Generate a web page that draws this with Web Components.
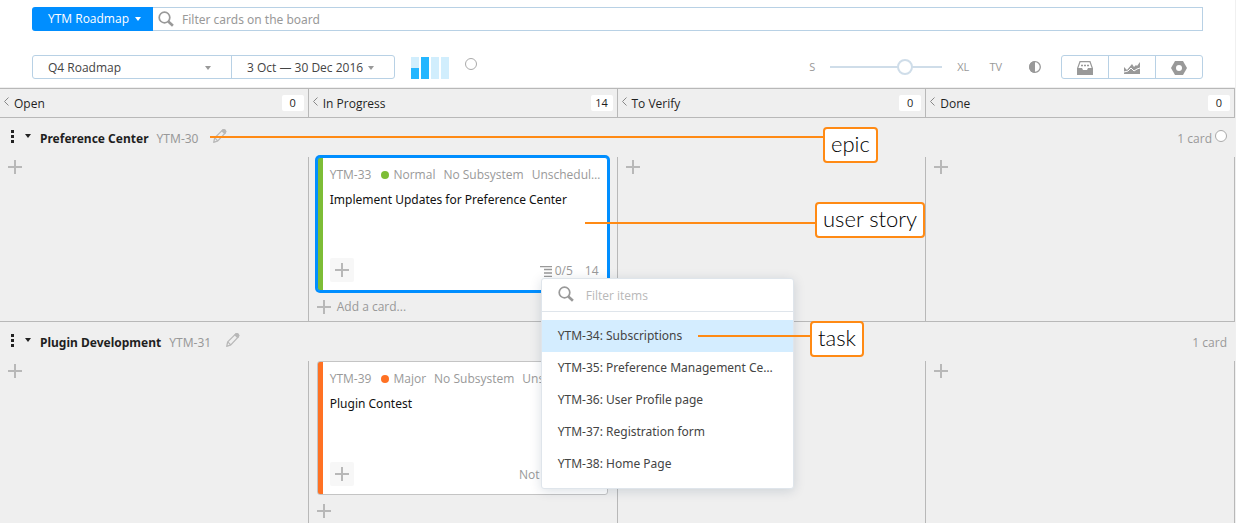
<!DOCTYPE html>
<html lang="en">
<head>
<meta charset="utf-8">
<title>YTM Roadmap</title>
<style>
  html { background: #fff; }
  body {
    margin: 0;
    border-right: 1px solid #f0f0f0;
    font: 12px/16px "Open Sans", "Noto Sans", sans-serif;
    color: #1f1f1f;
    overflow: hidden;
    --line: #b8d1e5;
    --grid: #b8b8b8;
    --muted: #999;
    --wide: "Noto Sans", "Open Sans", sans-serif;
  }
</style>
</head>
<body>
<agile-page></agile-page>
<script>
const icons = {
  search: '<svg width="16" height="16" viewBox="0 0 16 16" fill="none" stroke="#999"><circle cx="6.5" cy="6.5" r="5.3" stroke-width="1.7"/><path d="M10.3 10.5l4.6 4.3" stroke-width="2.6"/></svg>',
  plus: '<svg width="14" height="14" viewBox="0 0 14 14" fill="#b8b8b8"><path d="M6 0h2v6h6v2H8v6H6V8H0V6h6z"/></svg>',
  caret: '<svg width="6" height="4" viewBox="0 0 6 4"><path d="M0 0h6L3 4z" fill="currentColor"/></svg>',
  pencil: '<svg width="16" height="16" viewBox="0 0 16 16" fill="none" stroke="#b8b8b8" stroke-width="1.3" stroke-linejoin="round"><path d="M1.7 14.3l1-4.4 7.8-7.8q1.3-1.1 2.6.1t.2 2.7L5.8 12.9z"/><path d="M2.7 9.9l3.1 3M10 2.7l2.9 2.9"/><path d="M10.7 2.1q1.2-.9 2.4.1t.2 2.5l-.6.6-2.6-2.6z" fill="#b8b8b8"/></svg>'
};

function define(name, render) {
  customElements.define(name, class extends HTMLElement {
    connectedCallback() {
      if (this.shadowRoot) return;
      this.attachShadow({ mode: 'open' }).innerHTML = render(this);
    }
  });
}

const base = `
  *, *::before { box-sizing: border-box; }
  svg { display: block; flex: none; }
  button { font: inherit; color: inherit; background: none; border: 0; padding: 0; margin: 0; cursor: pointer; }
  input, select { font: inherit; margin: 0; outline: 0; }
`;

define('search-bar', () => `
  <style>${base}
    :host { display: flex; height: 24px; }
    .board { display: flex; align-items: center; justify-content: center; gap: 6px; width: 121px; padding-left: 4px;
      background: #008eff; color: #fff; border-radius: 3px 0 0 3px; }
    label { flex: 1; display: flex; align-items: center; gap: 8px; padding-left: 5px;
      border: 1px solid var(--line); border-left: 0; }
    input { flex: 1; min-width: 0; border: 0; padding: 0; background: none; height: 22px; font-family: var(--wide); }
    input::placeholder { color: var(--muted); opacity: 1; }
  </style>
  <button class="board">YTM Roadmap ${icons.caret}</button>
  <label>${icons.search}<input type="text" placeholder="Filter cards on the board" aria-label="Filter cards on the board"></label>`);

define('drop-select', el => `
  <style>${base}
    :host { display: grid; align-items: center; color: #444; }
    select, svg { grid-area: 1 / 1; }
    select { appearance: none; width: 100%; height: 22px; border: 0; background: none; color: inherit; padding: 2px 15px 0; }
    svg { justify-self: end; margin: 2px 20px 0 0; color: #999; pointer-events: none; }
  </style>
  <select aria-label="${el.getAttribute('label')}"><option>${el.getAttribute('value')}</option></select>${icons.caret}`);

define('board-toolbar', () => `
  <style>${base}
    :host { display: flex; align-items: center; height: 24px; color: var(--muted); }
    .sprint { display: flex; width: 363px; height: 24px; border: 1px solid var(--line); border-radius: 3px; }
    .sprint > :first-child { width: 199px; border-right: 1px solid var(--line); }
    .sprint > :last-child { flex: 1; }
    .bars { display: flex; gap: 2px; margin-left: 16px; height: 22px; align-self: flex-end; }
    .bars i { width: 8px; background: #d1eefd; }
    .bars .half { background: linear-gradient(#d1eefd 50%, #23b6ff 50%); }
    .bars .full { background: #23b6ff; }
    .ring { width: 12px; height: 12px; border: 1px solid #aaa; border-radius: 50%; margin: 0 auto 6px 16px; }
    .zoom { display: flex; align-items: center; font-size: 11px; }
    input { appearance: none; width: 112px; height: 18px; margin: 0 15px; background: linear-gradient(#cfdde9, #cfdde9) center / 100% 2px no-repeat; }
    input::-webkit-slider-thumb { appearance: none; width: 16px; height: 16px; border: 2px solid #cfdde9; border-radius: 50%; background: #fff; }
    .tv { margin: 0 27px 0 20px; }
    .tools { display: flex; height: 24px; width: 142px; margin-left: 20px; border: 1px solid var(--line); border-radius: 3px; }
    .tools button { flex: 1; display: flex; align-items: center; justify-content: center; padding-top: 2px; }
    .tools button + button { border-left: 1px solid var(--line); }
  </style>
  <div class="sprint">
    <drop-select label="Sprint" value="Q4 Roadmap"></drop-select>
    <drop-select label="Dates" value="3 Oct — 30 Dec 2016"></drop-select>
  </div>
  <div class="bars"><i class="half"></i><i class="full"></i><i></i><i></i></div>
  <span class="ring"></span>
  <div class="zoom">
    <span>S</span><input type="range" min="0" max="100" value="70" aria-label="Card size"><span>XL</span>
    <button class="tv">TV</button>
    <button aria-label="Contrast"><svg width="12" height="12" viewBox="0 0 12 12"><circle cx="6" cy="6" r="5.3" fill="#fff" stroke="#999" stroke-width="1.3"/><path d="M6 0a6 6 0 000 12z" fill="#999"/></svg></button>
  </div>
  <div class="tools">
    <button aria-label="Backlog"><svg width="16" height="14" viewBox="0 0 16 14"><path d="M3 .7h10L15.3 7v6H.7V7z" fill="#fff" stroke="#999" stroke-width="1.2"/><path d="M0 7h5l1 2h4l1-2h5v7H0z" fill="#999"/><path d="M4 4.5h2M7 4.5h2M10 4.5h2" stroke="#999" stroke-width="1.5"/></svg></button>
    <button aria-label="Chart"><svg width="16" height="12" viewBox="0 0 16 12"><path d="M0 5l3 3 5-6 2 3 2-2 1 1 3-4v12H0z" fill="#999"/><path d="M0 10l4-1 3-3 3 3 3-2 3-1" fill="none" stroke="#fff"/></svg></button>
    <button aria-label="Settings"><svg width="16" height="14" viewBox="0 0 16 14"><path d="M4 0h8l4 7-4 7H4L0 7z" fill="#999"/><circle cx="8" cy="7" r="3" fill="#fff"/></svg></button>
  </div>`);

define('column-header', el => `
  <style>${base}
    :host { display: flex; box-sizing: border-box; align-items: center; height: 28px; padding: 2px 4px 0; border-right: 1px solid var(--grid); }
    button { margin-bottom: 6px; }
    h2 { flex: 1; margin: 0 0 0 5px; font: inherit; }
    .count { width: 22px; height: 16px; margin-bottom: 2px; border-radius: 2px; background: #fff; text-align: center; font-size: 11px; }
  </style>
  <button aria-label="Collapse column"><svg width="5" height="9" viewBox="0 0 5 9" fill="none" stroke="#888"><path d="M4.5 .5l-4 4 4 4"/></svg></button>
  <h2><slot></slot></h2><span class="count">${el.getAttribute('count')}</span>`);

define('swim-lane', el => `
  <style>${base}
    :host { display: block; border-bottom: 1px solid var(--grid); }
    header { display: flex; align-items: center; height: 39px; padding: 3px 8px 0 11px; color: var(--muted); }
    .drag { display: grid; gap: 2px; margin: 0 11px 5px 0; }
    .drag i { width: 3px; height: 3px; background: #222; }
    .toggle { margin: 0 9px 6px 0; color: #222; }
    h3 { margin: 0 8px 0 0; font: bold 12px/16px var(--wide); color: #1f1f1f; }
    a { font-family: var(--wide); color: inherit; text-decoration: none; margin-right: 14px; }
    .edit { margin-bottom: 6px; }
    .total { margin-left: auto; }
    .ring { width: 12px; height: 12px; margin: 0 0 6px 3px; border: 1px solid #aaa; border-radius: 50%; background: #fff; }
    .cells { display: grid; grid-template-columns: repeat(4, minmax(0, 1fr)); min-height: 164px; }
  </style>
  <header>
    <span class="drag"><i></i><i></i><i></i></span>
    <button class="toggle" aria-label="Collapse swimlane">${icons.caret}</button>
    <h3>${el.getAttribute('name')}</h3><a href="#">${el.getAttribute('key')}</a>
    <button class="edit" aria-label="Edit">${icons.pencil}</button>
    <span class="total">1 card</span>${el.hasAttribute('ring') ? '<span class="ring"></span>' : ''}
  </header>
  <div class="cells"><slot></slot></div>`);

define('lane-cell', el => `
  <style>${base}
    :host { display: block; border-right: 1px solid var(--grid); padding: 0 9px 0 8px; }
    button { display: flex; align-items: center; gap: 6px; height: 20px; color: var(--muted); }
    ::slotted(*) { margin-bottom: 6px; }
  </style>
  <slot></slot><button aria-label="Add a card">${icons.plus}${el.getAttribute('add') || ''}</button>`);

define('task-card', el => `
  <style>${base}
    :host { display: flex; flex-direction: column; position: relative; height: 134px; padding: 9px 4px 8px 12px; box-sizing: border-box;
      background: linear-gradient(var(--priority), var(--priority)) 0 0 / 5px 100% no-repeat #fff;
      border: 1px solid #c4c4c4; border-radius: 3px; }
    :host([selected]) { border-color: #008eff; box-shadow: 0 0 0 2px #008eff; }
    .fields { display: flex; gap: 8px; color: var(--muted); white-space: nowrap; }
    .fields :last-child { overflow: hidden; text-overflow: ellipsis; }
    a { color: inherit; text-decoration: none; }
    .prio { padding-left: 2px; }
    .prio::before { content: ""; display: inline-block; width: 8px; height: 8px; margin-right: 4px; border-radius: 50%; background: var(--priority); }
    h4 { margin: 9px 0 0; font: 12px/16px var(--wide); color: #111; }
    footer { display: flex; align-items: center; justify-content: flex-end; gap: 12px; margin-top: auto; padding-right: 4px; color: var(--muted); }
    .add { width: 24px; height: 24px; display: grid; place-items: center; margin-right: auto; background: #f7f7f7; border-radius: 2px; }
    .sub { display: flex; align-items: center; gap: 3px; }
    .sub, .estimate { padding-top: 2px; }
  </style>
  <div class="fields"><a href="#">${el.getAttribute('key')}</a><span class="prio">${el.getAttribute('priority')}</span><span>No Subsystem</span><span>Unscheduled</span></div>
  <h4>${el.getAttribute('name')}</h4>
  <footer><button class="add" aria-label="Add subtask">${icons.plus}</button>
    ${el.hasAttribute('done') ? `<button class="sub"><svg width="12" height="11" viewBox="0 0 12 11" stroke="#999"><path d="M0 .5h12M4 3.5h8M4 7h8M4 10.5h8" stroke-width="1.3"/></svg>${el.getAttribute('done')}</button>` : ''}
    <span class="estimate">${el.getAttribute('estimate')}</span></footer>
  <slot></slot>`);

define('item-menu', () => {
  const items = ['YTM-34: Subscriptions', 'YTM-35: Preference Management Center', 'YTM-36: User Profile page', 'YTM-37: Registration form', 'YTM-38: Home Page'];
  return `
  <style>${base}
    :host { position: absolute; z-index: 2; left: 223px; top: 120px; width: 253px; box-sizing: border-box; background: #fff;
      border: 1px solid #dfe5eb; border-radius: 3px; box-shadow: 0 2px 12px rgba(0, 42, 76, .15); color: #444; font-family: var(--wide); }
    label { display: flex; align-items: center; gap: 12px; height: 33px; padding: 1px 16px 0; border-bottom: 1px solid #dfe5eb; }
    label svg { margin-bottom: 4px; }
    input { flex: 1; min-width: 0; border: 0; padding: 0; font-family: "Open Sans", sans-serif; }
    input::placeholder { color: #b8b8b8; opacity: 1; }
    ul { list-style: none; margin: 0; padding: 8px 0; }
    a { display: block; padding: 0 13px 0 16px; line-height: 32px; color: inherit; text-decoration: none; white-space: nowrap; overflow: hidden; text-overflow: ellipsis; }
    li:first-child { background: #d4edff; }
  </style>
  <label>${icons.search}<input type="text" placeholder="Filter items" aria-label="Filter items"></label>
  <ul>${items.map(t => `<li><a href="#">${t}</a></li>`).join('')}</ul>`;
});

define('call-out', () => `
  <style>${base}
    :host { position: absolute; z-index: 3; display: flex; left: var(--x); top: var(--y); pointer-events: none; }
    i { width: var(--reach); height: 2px; margin-top: var(--drop); background: #ff8a14; }
    span { height: 36px; padding: 0 6px; border: 2px solid #ff8a14; border-radius: 4px; background: #fff; color: #000;
      font: 300 22px/30px Lato, sans-serif; white-space: nowrap; }
  </style><i></i><span><slot></slot></span>`);

define('agile-page', () => `
  <style>${base}
    :host { display: block; position: relative; }
    .top { display: grid; gap: 24px; padding: 7px 32px 8px; }
    .board { background: #efefef; border-top: 1px solid #efefef; }
    .columns { display: grid; grid-template-columns: repeat(4, minmax(0, 1fr)); border: solid var(--grid); border-width: 1px 0; }
  </style>
  <div class="top"><search-bar></search-bar><board-toolbar></board-toolbar></div>
  <main class="board">
    <div class="columns">
      <column-header count="0">Open</column-header>
      <column-header count="14">In Progress</column-header>
      <column-header count="0">To Verify</column-header>
      <column-header count="0">Done</column-header>
    </div>
    <swim-lane name="Preference Center" key="YTM-30" ring>
      <lane-cell></lane-cell>
      <lane-cell add="Add a card...">
        <task-card selected style="--priority:#7dbd36" key="YTM-33" priority="Normal" name="Implement Updates for Preference Center" done="0/5" estimate="14"><item-menu></item-menu></task-card>
      </lane-cell>
      <lane-cell></lane-cell>
      <lane-cell></lane-cell>
    </swim-lane>
    <swim-lane name="Plugin Development" key="YTM-31">
      <lane-cell></lane-cell>
      <lane-cell>
        <task-card style="--priority:#ff7123" key="YTM-39" priority="Major" name="Plugin Contest" estimate="Not estimated"></task-card>
      </lane-cell>
      <lane-cell></lane-cell>
      <lane-cell></lane-cell>
    </swim-lane>
  </main>
  <call-out style="--x:210px; --y:127px; --reach:613px; --drop:9px">epic</call-out>
  <call-out style="--x:585px; --y:202px; --reach:230px; --drop:20px">user story</call-out>
  <call-out style="--x:698px; --y:321px; --reach:112px; --drop:14px">task</call-out>`);
</script>
</body>
</html>
